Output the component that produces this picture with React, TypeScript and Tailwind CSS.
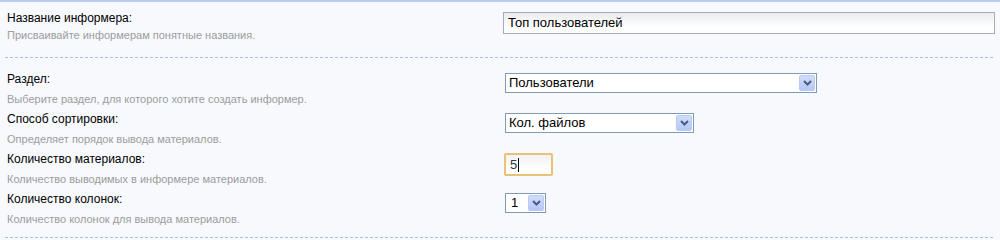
import React from "react";

const Chevron = () => (
  <svg width="9" height="6" viewBox="0 0 9 6" className="block">
    <path d="M1 1 L4.5 4.5 L8 1" fill="none" stroke="#4a5d80" strokeWidth="2" />
  </svg>
);

function Select({ text, className }: { text: string; className: string }) {
  return (
    <div
      className={
        "flex h-[20px] items-center justify-between border border-[#7f9db9] bg-white pl-[3px] pr-[1px] " +
        className
      }
    >
      <span className="text-[13px] leading-[18px] text-black">{text}</span>
      <div className="flex h-[16px] w-[16px] items-center justify-center rounded-[2px] border border-[#b9cbf3] bg-[linear-gradient(#d0ddfc,#b4c7f6)]">
        <Chevron />
      </div>
    </div>
  );
}

function Row({
  label,
  desc,
  control,
  descGap,
}: {
  label: string;
  desc: string;
  control: React.ReactNode;
  descGap: string;
}) {
  return (
    <div className="flex">
      <div className="w-[496px] shrink-0">
        <div className="text-[12px] leading-[16px] text-black">{label}</div>
        <div className={descGap + " text-[11px] leading-[14px] text-[#9c9c9c]"}>{desc}</div>
      </div>
      <div className="pt-[2px]">{control}</div>
    </div>
  );
}

const Dashed = () => (
  <div className="mx-[5px] h-px bg-[repeating-linear-gradient(90deg,#a6bfe9_0px,#a6bfe9_3px,transparent_3px,transparent_5px)]" />
);

export default function App() {
  return (
    <div className="h-[240px] w-full overflow-hidden bg-[#f7f9fd] font-['Liberation_Sans',Arial,sans-serif]">
      <div className="h-[2px] bg-[#b8cdee]" />
      <div className="pl-[7px] pr-[5px] pb-[15px] pt-[8px]">
        <Row
          label="Название информера:"
          desc="Присваивайте информерам понятные названия."
          descGap="mt-[2px]"
          control={
            <div className="flex h-[22px] w-[492px] items-center border border-[#a5acbd] bg-[linear-gradient(#ebecee,#ffffff_70%)] pl-[4px] text-[13px] text-black">
              Топ пользователей
            </div>
          }
        />
      </div>
      <Dashed />
      <div className="flex flex-col gap-[5px] pl-[7px] pr-[5px] pb-[11px] pt-[13px]">
        <Row
          label="Раздел:"
          desc="Выберите раздел, для которого хотите создать информер."
          descGap="mt-[5px]"
          control={<Select text="Пользователи" className="ml-[2px] w-[312px]" />}
        />
        <Row
          label="Способ сортировки:"
          desc="Определяет порядок вывода материалов."
          descGap="mt-[5px]"
          control={<Select text="Кол. файлов" className="ml-[2px] w-[189px]" />}
        />
        <Row
          label="Количество материалов:"
          desc="Количество выводимых в информере материалов."
          descGap="mt-[5px]"
          control={
            <div className="ml-[1px] flex h-[23px] w-[49px] items-center rounded-[2px] border-2 border-[#e9c275] bg-[linear-gradient(#f1f1f4,#ffffff_70%)] pl-[4px]">
              <span className="text-[13px] leading-[18px] text-[#333]">5</span>
              <span className="ml-[1px] h-[14px] w-[1px] bg-black" />
            </div>
          }
        />
        <Row
          label="Количество колонок:"
          desc="Количество колонок для вывода материалов."
          descGap="mt-[5px]"
          control={<Select text="1" className="ml-[2px] w-[41px] pl-[5px]" />}
        />
      </div>
      <Dashed />
    </div>
  );
}
